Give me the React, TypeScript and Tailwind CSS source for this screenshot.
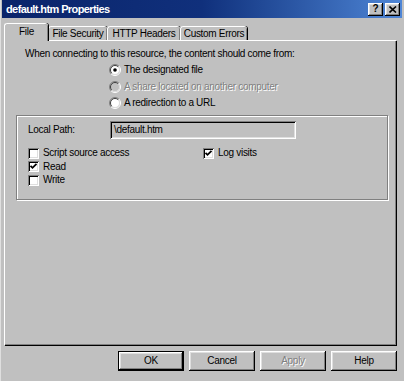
import React from 'react';

const bevel =
  'shadow-[inset_-1px_-1px_#000,inset_1px_1px_#fff,inset_-2px_-2px_#808080,inset_2px_2px_#dfdfdf]';
const sunken =
  'shadow-[inset_1px_1px_#808080,inset_-1px_-1px_#fff,inset_2px_2px_#000,inset_-2px_-2px_#dfdfdf]';
const etched = 'text-[#808080] [text-shadow:1px_1px_0_#fff]';

function Radio({ checked, disabled }: { checked?: boolean; disabled?: boolean }) {
  return (
    <svg width="12" height="12" viewBox="0 0 12 12" className="shrink-0">
      <circle cx="6" cy="6" r="4.5" fill={disabled ? '#c0c0c0' : '#fff'} />
      <path d="M2.1 9.9 A5.5 5.5 0 0 1 9.9 2.1" stroke="#808080" fill="none" />
      <path d="M9.9 2.1 A5.5 5.5 0 0 1 2.1 9.9" stroke="#fff" fill="none" />
      <path d="M2.8 9.2 A4.5 4.5 0 0 1 9.2 2.8" stroke="#404040" fill="none" />
      <path d="M9.2 2.8 A4.5 4.5 0 0 1 2.8 9.2" stroke="#dfdfdf" fill="none" />
      {checked && <circle cx="6" cy="6" r="1.8" fill="#000" />}
    </svg>
  );
}

function Check({ checked }: { checked?: boolean }) {
  return (
    <div className={`w-[11px] h-[11px] shrink-0 bg-white ${sunken} flex items-center justify-center`}>
      {checked && (
        <svg width="11" height="11" viewBox="0 0 11 11">
          <polyline points="2.5,4.8 4.5,6.8 8.5,2.8" stroke="#000" strokeWidth="1.8" fill="none" />
        </svg>
      )}
    </div>
  );
}

function TitleBtn({ children }: { children: React.ReactNode }) {
  return (
    <div className={`w-[15px] h-[13px] bg-[#c0c0c0] ${bevel} flex items-center justify-center`}>
      {children}
    </div>
  );
}

function Button({ label, isDefault, disabled }: { label: string; isDefault?: boolean; disabled?: boolean }) {
  return (
    <div className={`w-[66px] h-[20px] ${isDefault ? 'border border-black' : ''}`}>
      <div className={`w-full h-full bg-[#c0c0c0] ${bevel} flex items-center justify-center ${disabled ? etched : ''}`}>
        {label}
      </div>
    </div>
  );
}

const tabs = [
  { label: 'File', w: 'w-[44px]', active: true },
  { label: 'File Security', w: 'w-[59px]' },
  { label: 'HTTP Headers', w: 'w-[73px]' },
  { label: 'Custom Errors', w: 'w-[67px]' },
];

export default function App() {
  return (
    <div className="w-[404px] h-[381px] bg-[#c0c0c0] font-['Liberation_Sans',Arial,sans-serif] text-[10px] leading-[12px] tracking-[-0.3px] text-black overflow-hidden">
      <div className="h-full border-l border-l-[#dfdfdf] flex flex-col">
        <div className="h-[18px] mr-[2px] ml-[1px] flex items-center justify-between pl-[4px] pr-[2px] bg-linear-to-r from-[#0a246a] via-[#10307c] to-[#4f86d6]">
          <span className="text-white font-bold text-[11px] tracking-[-0.6px]">default.htm Properties</span>
          <div className="flex gap-[2px]">
            <TitleBtn>
              <span className="font-bold text-[10px] leading-none">?</span>
            </TitleBtn>
            <TitleBtn>
              <svg width="8" height="7" viewBox="0 0 8 7">
                <path d="M0.5 0.5 L7 6.5 M7 0.5 L0.5 6.5" stroke="#000" strokeWidth="1.6" />
              </svg>
            </TitleBtn>
          </div>
        </div>

        <div className="flex items-end h-[22px] pl-[3px]">
          {tabs.map((t) => (
            <div
              key={t.label}
              className={`${t.w} flex items-center justify-center bg-[#c0c0c0] border-l border-t border-white rounded-t-[3px] shadow-[inset_-1px_0_#808080,1px_0_#000] ${
                t.active ? 'h-[18px] relative z-10 -mb-[1px] pb-[2px]' : 'h-[14px]'
              }`}
            >
              {t.label}
            </div>
          ))}
        </div>

        <div className="ml-[3px] w-[392px] h-[305px] border-t border-l border-white shadow-[inset_-1px_-1px_#808080,1px_1px_#000] flex flex-col">
          <div className="pl-[20px] pt-[7px]">When connecting to this resource, the content should come from:</div>
          <div className="pl-[104px] pt-[2px] flex flex-col">
            <div className="h-[16px] flex items-center gap-[3px]">
              <Radio checked />
              <span>The designated file</span>
            </div>
            <div className="h-[17px] flex items-center gap-[3px]">
              <Radio disabled />
              <span className={etched}>A share located on another computer</span>
            </div>
            <div className="h-[16px] flex items-center gap-[3px]">
              <Radio />
              <span>A redirection to a URL</span>
            </div>
          </div>

          <div className="ml-[11px] mt-[4px] w-[372px] h-[85px] border border-[#808080] shadow-[1px_1px_#fff,inset_1px_1px_#fff] px-[11px] pt-[5px]">
            <div className="flex items-center h-[18px]">
              <span className="w-[82px]">Local Path:</span>
              <div className={`w-[186px] h-[18px] ${sunken} flex items-center pl-[4px]`}>\default.htm</div>
            </div>
            <div className="mt-[7px] flex">
              <div className="w-[175px] flex flex-col">
                <div className="h-[14px] flex items-center gap-[4px]">
                  <Check />
                  <span>Script source access</span>
                </div>
                <div className="h-[13px] flex items-center gap-[4px]">
                  <Check checked />
                  <span>Read</span>
                </div>
                <div className="h-[14px] flex items-center gap-[4px]">
                  <Check />
                  <span>Write</span>
                </div>
              </div>
              <div className="h-[14px] flex items-center gap-[4px]">
                <Check checked />
                <span>Log visits</span>
              </div>
            </div>
          </div>
        </div>

        <div className="flex justify-end gap-[5px] pr-[7px] mt-[6px]">
          <Button label="OK" isDefault />
          <Button label="Cancel" />
          <Button label="Apply" disabled />
          <Button label="Help" />
        </div>
      </div>
    </div>
  );
}
